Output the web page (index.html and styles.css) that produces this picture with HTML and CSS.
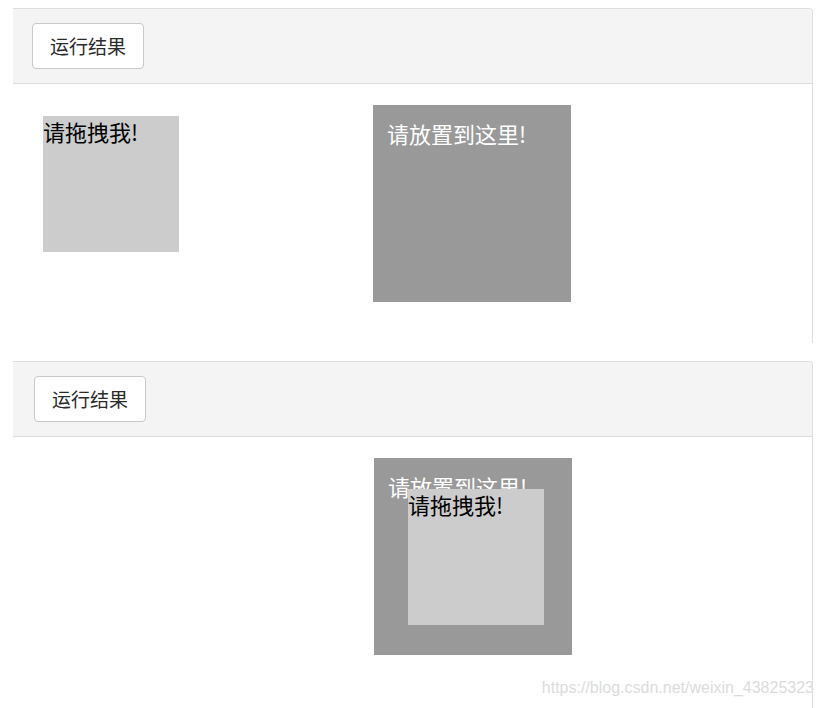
FILE: index.html
```html
<!DOCTYPE html>
<html lang="zh-CN">
<head>
<meta charset="utf-8">
<title>拖放示例</title>
<link rel="stylesheet" href="styles.css">
</head>
<body>
<div class="page">
  <section class="panel panel-first">
    <div class="panel-header">
      <button class="run-btn">运行结果</button>
    </div>
    <div class="panel-body body-first">
      <div class="drag">请拖拽我!</div>
      <div class="drop drop-first">请放置到这里!</div>
    </div>
  </section>
  <section class="panel panel-second">
    <div class="panel-header header-second">
      <button class="run-btn">运行结果</button>
    </div>
    <div class="panel-body body-second">
      <div class="drop drop-second">请放置到这里!
        <div class="drag dropped">请拖拽我!</div>
      </div>
    </div>
  </section>
  <div class="watermark">https://blog.csdn.net/weixin_43825323</div>
</div>
</body>
</html>
```
FILE: styles.css
```css
html, body {
  margin: 0;
  padding: 0;
  background: #fff;
}
body {
  font-family: "Noto Sans CJK SC", "Noto Sans", sans-serif;
  overflow: hidden;
}
.page {
  position: relative;
  width: 823px;
  height: 708px;
  padding-top: 8px;
  box-sizing: border-box;
}
.panel {
  margin-left: 13px;
  width: 800px;
  border-top: 1px solid #dedede;
  border-right: 1px solid #dedede;
  border-top-right-radius: 4px;
  box-sizing: border-box;
}
.panel-second {
  margin-top: 18px;
}
.panel-header {
  height: 75px;
  box-sizing: border-box;
  background: #f4f4f4;
  border-bottom: 1px solid #dcdcdc;
  border-top-right-radius: 4px;
  padding: 14px 0 0 19px;
}
.header-second {
  padding-left: 21px;
}
.run-btn {
  width: 112px;
  height: 46px;
  background: #fff;
  border: 1px solid #c9c9c9;
  border-radius: 4px;
  font-family: "Noto Sans CJK SC", sans-serif;
  font-size: 19px;
  color: #2b2b2b;
  padding: 0;
  line-height: 44px;
}
.panel-body {
  display: flex;
  align-items: flex-start;
  box-sizing: border-box;
}
.body-first {
  height: 259px;
  padding-top: 21px;
}
.body-second {
  height: 272px;
  padding-top: 21px;
}
.drag {
  width: 136px;
  height: 136px;
  background: #cccccc;
  color: #000;
  font-size: 22px;
  line-height: 30px;
  box-sizing: border-box;
}
.body-first .drag {
  margin-top: 11px;
  margin-left: 30px;
}
.drop {
  position: relative;
  width: 198px;
  height: 197px;
  background: #999999;
  color: #fff;
  font-size: 22px;
  line-height: 30px;
  padding: 13px 14px;
  box-sizing: border-box;
}
.drop-first {
  margin-left: 194px;
}
.drop-second {
  margin-left: 361px;
}
.dropped {
  position: absolute;
  left: 34px;
  top: 31px;
}
.watermark {
  position: absolute;
  right: 9px;
  top: 679px;
  font-family: "Liberation Sans", Arial, sans-serif;
  font-size: 16px;
  color: #dcdcdc;
  white-space: nowrap;
}
```
